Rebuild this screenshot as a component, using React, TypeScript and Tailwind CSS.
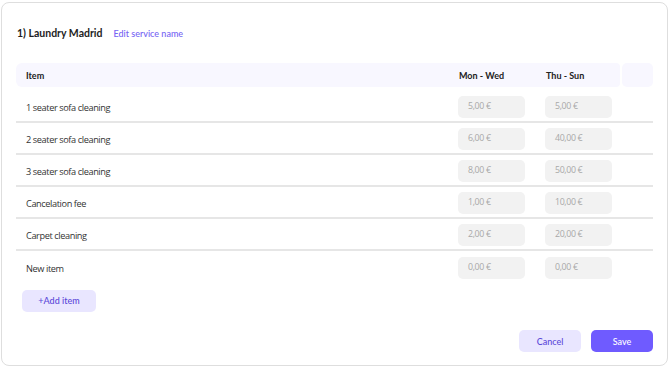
import React from 'react'

type Row = { name: string; mon: string; thu: string }

const rows: Row[] = [
  { name: '1 seater sofa cleaning', mon: '5,00 €', thu: '5,00 €' },
  { name: '2 seater sofa cleaning', mon: '6,00 €', thu: '40,00 €' },
  { name: '3 seater sofa cleaning', mon: '8,00 €', thu: '50,00 €' },
  { name: 'Cancelation fee', mon: '1,00 €', thu: '10,00 €' },
  { name: 'Carpet cleaning', mon: '2,00 €', thu: '20,00 €' },
  { name: 'New item', mon: '0,00 €', thu: '0,00 €' },
]

function PriceBox({ value }: { value: string }) {
  return (
    <div className="w-[67px] h-[22px] rounded-[5px] bg-[#f2f2f2] flex items-center pl-[10px] text-[8.8px] tracking-[-0.35px] text-[#a8a8a8] font-['Open_Sans',sans-serif]">
      {value}
    </div>
  )
}

export default function App() {
  return (
    <div className="w-[670px] h-[368px] bg-white pt-[2px] pl-[1px] font-['Lato',sans-serif]">
      <div className="w-[667px] h-[364px] rounded-[8px] border border-[#dedede] px-[14px] flex flex-col">
        <div className="flex items-center h-[20px] mt-[21px] pl-[1px]">
          <h2 className="text-[10.5px] font-bold text-[#222]">1) Laundry Madrid</h2>
          <button className="ml-[11px] text-[9px] text-[#7563f3] font-medium">Edit service name</button>
        </div>

        <div className="mt-[19px] flex h-[24px] gap-[2px]">
          <div className="flex-1 flex items-center pt-[2px] bg-[#f8f7ff] rounded-l-[6px] rounded-r-[4px] text-[9px] font-bold text-[#222]">
            <div className="flex-1 pl-[10px]">Item</div>
            <div className="w-[87px]">Mon - Wed</div>
            <div className="w-[74px]">Thu - Sun</div>
          </div>
          <div className="w-[31px] bg-[#f8f7ff] rounded-[5px]" />
        </div>

        <div className="mt-[4px] flex flex-col">
          {rows.map((r, i) => (
            <div
              key={r.name}
              className={`flex items-center h-[32px] ${i < rows.length - 1 ? 'border-b-2 border-[#e6e6e6]' : ''}`}
            >
              <div className="flex-1 pl-[10px] pt-[3px] text-[9.2px] tracking-[-0.4px] text-[#333] font-['Open_Sans',sans-serif]">{r.name}</div>
              <div className="w-[87px] pt-[1px]">
                <PriceBox value={r.mon} />
              </div>
              <div className="w-[76px] pt-[1px]">
                <PriceBox value={r.thu} />
              </div>
              <div className="w-[32px]" />
            </div>
          ))}
        </div>

        <div className="mt-[3px] pl-[6px]">
          <button className="w-[74px] h-[22px] rounded-[5px] bg-[#e9e6ff] text-[9px] font-medium text-[#5b48d9]">
            +Add item
          </button>
        </div>

        <div className="mt-auto mb-[13px] flex justify-end gap-[10px]">
          <button className="w-[62px] h-[22px] rounded-[5px] bg-[#e9e6ff] pt-[1px] text-[9px] font-medium text-[#5b48d9]">
            Cancel
          </button>
          <button className="w-[62px] h-[22px] rounded-[5px] bg-[#6f5bff] pt-[1px] text-[9px] font-medium text-white">
            Save
          </button>
        </div>
      </div>
    </div>
  )
}
